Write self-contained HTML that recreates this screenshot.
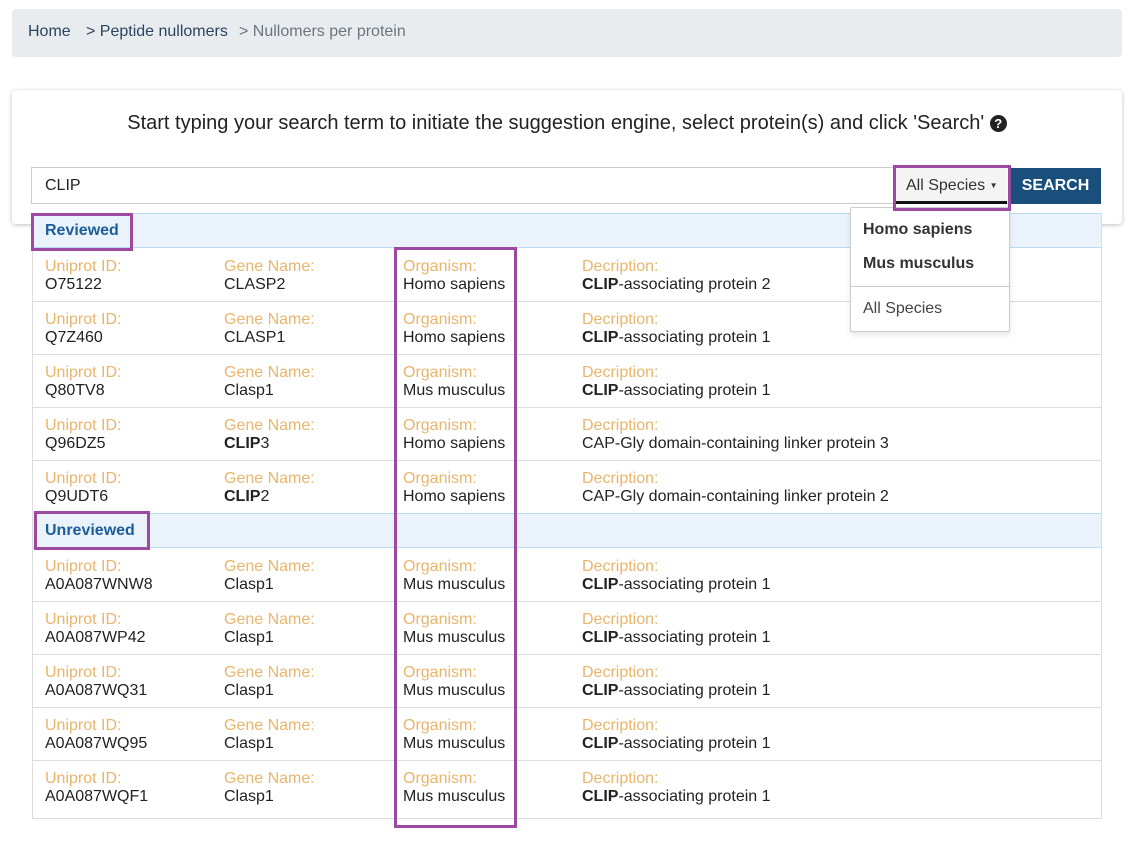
<!DOCTYPE html>
<html><head><meta charset="utf-8"><style>
*{box-sizing:border-box;margin:0;padding:0}
body{width:1138px;height:862px;background:#fff;font-family:"Liberation Sans",Arial,sans-serif;font-size:16px;color:#222;position:relative;overflow:hidden}
.abs{position:absolute}
.bc{left:12px;top:9px;width:1110px;height:48px;background:#e9ecef;border-radius:4px}
.bc span{position:absolute;top:14px;font-size:16px}
.card{left:12px;top:90px;width:1110px;height:134px;background:#fff;border-radius:4px;box-shadow:0 1px 5px rgba(0,0,0,.25)}
.title{left:0;top:112px;width:1134px;text-align:center;font-size:20px;color:#222}
.input{left:31px;top:167px;width:980px;height:37px;border:1px solid #ccc;background:#fff}
.list{left:32px;top:213px;width:1070px;height:606px;border:1px solid #ddd;background:#fff}
.hdr{position:absolute;left:0;width:1068px;height:35px;background:#eaf3fc;border-top:1px solid #bcdcf3;border-bottom:1px solid #bcdcf3}
.hdr b{position:absolute;left:12px;top:8px;color:#1c5d99;font-size:16px}
.row{position:absolute;left:0;width:1068px;height:53px;border-bottom:1px solid #ddd}
.c{position:absolute;top:9px;line-height:18px}
.c i{font-style:normal;color:#e8b56c;display:block}
.pb{position:absolute;border:3px solid #9c4aa0}
</style></head><body>
<div class="abs bc">
<span style="left:16px;color:#2b4460">Home</span>
<span style="left:74px;color:#2b4460">&gt; Peptide nullomers</span>
<span style="left:227px;color:#6c757d">&gt; Nullomers per protein</span>
</div>
<div class="abs card"></div>
<div class="abs title">Start typing your search term to initiate the suggestion engine, select protein(s) and click 'Search' <span style="display:inline-block;width:17px;height:17px;border-radius:50%;background:#222;color:#fff;font-size:13px;font-weight:bold;line-height:17px;text-align:center;vertical-align:1px">?</span></div>
<div class="abs input"><span style="position:absolute;left:13px;top:9px;color:#222">CLIP</span></div>
<div class="abs" style="left:896px;top:168px;width:111px;height:36px;background:#f4f4f4;border-bottom:3px solid #111;color:#333;padding:9px 0 0 10px">All Species <span style="font-size:8px;vertical-align:2px">▼</span></div>
<div class="abs" style="left:1010px;top:168px;width:91px;height:36px;background:#1a4e7b;color:#fff;font-weight:bold;text-align:center;padding-top:9px">SEARCH</div>
<div class="abs list">
<div class="hdr" style="top:-1px"><b>Reviewed</b></div>
<div class="row" style="top:35px"><div class="c" style="left:12px"><i>Uniprot ID:</i>O75122</div><div class="c" style="left:191px"><i>Gene Name:</i>CLASP2</div><div class="c" style="left:370px"><i>Organism:</i>Homo sapiens</div><div class="c" style="left:549px"><i>Decription:</i><b>CLIP</b>-associating protein 2</div></div>
<div class="row" style="top:88px"><div class="c" style="left:12px"><i>Uniprot ID:</i>Q7Z460</div><div class="c" style="left:191px"><i>Gene Name:</i>CLASP1</div><div class="c" style="left:370px"><i>Organism:</i>Homo sapiens</div><div class="c" style="left:549px"><i>Decription:</i><b>CLIP</b>-associating protein 1</div></div>
<div class="row" style="top:141px"><div class="c" style="left:12px"><i>Uniprot ID:</i>Q80TV8</div><div class="c" style="left:191px"><i>Gene Name:</i>Clasp1</div><div class="c" style="left:370px"><i>Organism:</i>Mus musculus</div><div class="c" style="left:549px"><i>Decription:</i><b>CLIP</b>-associating protein 1</div></div>
<div class="row" style="top:194px"><div class="c" style="left:12px"><i>Uniprot ID:</i>Q96DZ5</div><div class="c" style="left:191px"><i>Gene Name:</i><b>CLIP</b>3</div><div class="c" style="left:370px"><i>Organism:</i>Homo sapiens</div><div class="c" style="left:549px"><i>Decription:</i>CAP-Gly domain-containing linker protein 3</div></div>
<div class="row" style="top:247px;border-bottom:none"><div class="c" style="left:12px"><i>Uniprot ID:</i>Q9UDT6</div><div class="c" style="left:191px"><i>Gene Name:</i><b>CLIP</b>2</div><div class="c" style="left:370px"><i>Organism:</i>Homo sapiens</div><div class="c" style="left:549px"><i>Decription:</i>CAP-Gly domain-containing linker protein 2</div></div>
<div class="hdr" style="top:299px"><b>Unreviewed</b></div>
<div class="row" style="top:335px"><div class="c" style="left:12px"><i>Uniprot ID:</i>A0A087WNW8</div><div class="c" style="left:191px"><i>Gene Name:</i>Clasp1</div><div class="c" style="left:370px"><i>Organism:</i>Mus musculus</div><div class="c" style="left:549px"><i>Decription:</i><b>CLIP</b>-associating protein 1</div></div>
<div class="row" style="top:388px"><div class="c" style="left:12px"><i>Uniprot ID:</i>A0A087WP42</div><div class="c" style="left:191px"><i>Gene Name:</i>Clasp1</div><div class="c" style="left:370px"><i>Organism:</i>Mus musculus</div><div class="c" style="left:549px"><i>Decription:</i><b>CLIP</b>-associating protein 1</div></div>
<div class="row" style="top:441px"><div class="c" style="left:12px"><i>Uniprot ID:</i>A0A087WQ31</div><div class="c" style="left:191px"><i>Gene Name:</i>Clasp1</div><div class="c" style="left:370px"><i>Organism:</i>Mus musculus</div><div class="c" style="left:549px"><i>Decription:</i><b>CLIP</b>-associating protein 1</div></div>
<div class="row" style="top:494px"><div class="c" style="left:12px"><i>Uniprot ID:</i>A0A087WQ95</div><div class="c" style="left:191px"><i>Gene Name:</i>Clasp1</div><div class="c" style="left:370px"><i>Organism:</i>Mus musculus</div><div class="c" style="left:549px"><i>Decription:</i><b>CLIP</b>-associating protein 1</div></div>
<div class="row" style="top:547px;border-bottom:none;height:57px"><div class="c" style="left:12px"><i>Uniprot ID:</i>A0A087WQF1</div><div class="c" style="left:191px"><i>Gene Name:</i>Clasp1</div><div class="c" style="left:370px"><i>Organism:</i>Mus musculus</div><div class="c" style="left:549px"><i>Decription:</i><b>CLIP</b>-associating protein 1</div></div>
</div>
<div class="abs" style="left:850px;top:207px;width:160px;height:125px;background:#fff;border:1px solid #ccc;border-radius:2px;box-shadow:0 3px 6px rgba(0,0,0,.1)">
<div style="position:absolute;left:12px;top:13px;font-weight:bold;color:#333">Homo sapiens</div>
<div style="position:absolute;left:12px;top:47px;font-weight:bold;color:#333">Mus musculus</div>
<div style="position:absolute;left:0;top:78px;width:158px;border-top:1px solid #ccc"></div>
<div style="position:absolute;left:12px;top:92px;color:#444">All Species</div>
</div>
<div class="pb" style="left:893px;top:165px;width:118px;height:46px"></div>
<div class="pb" style="left:31px;top:213px;width:102px;height:38px"></div>
<div class="pb" style="left:34px;top:511px;width:116px;height:39px"></div>
<div class="pb" style="left:394px;top:247px;width:123px;height:581px"></div>
</body></html>
